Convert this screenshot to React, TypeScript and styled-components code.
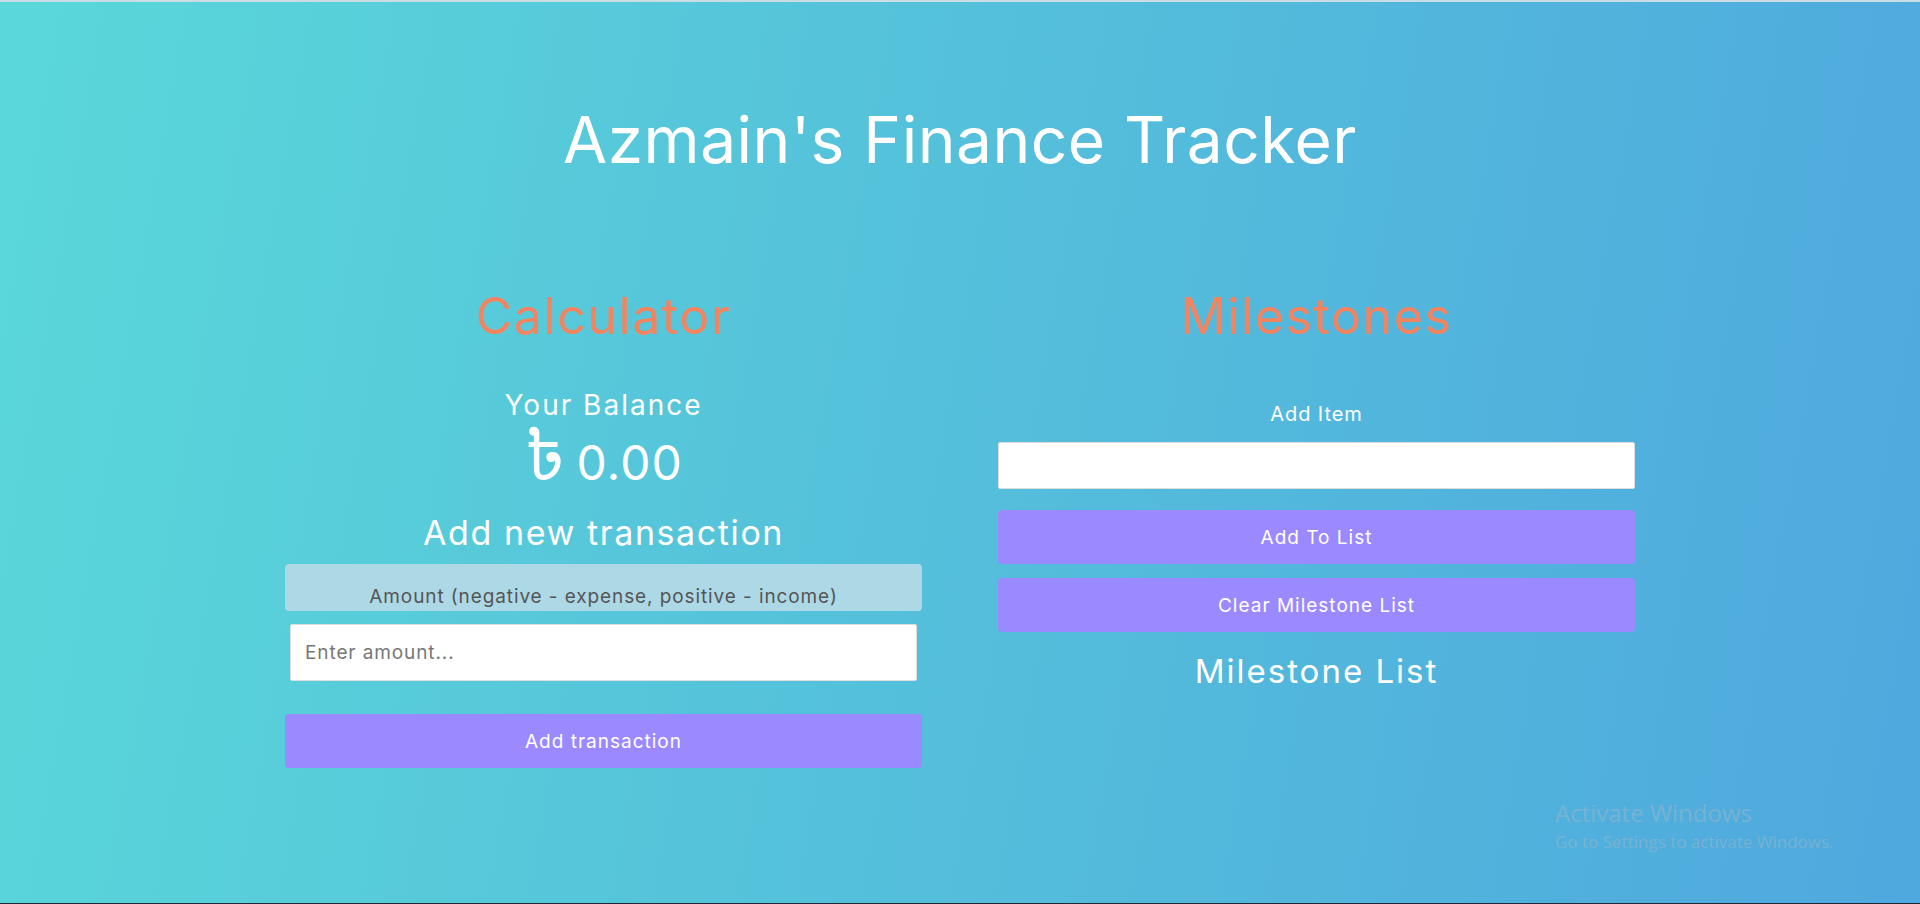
import React from "react";
import styled, { createGlobalStyle } from "styled-components";

const GlobalStyle = createGlobalStyle`
  html, body { margin: 0; padding: 0; }
  body { font-family: Inter, "Noto Sans", sans-serif; }
  * { box-sizing: border-box; }
`;

const Page = styled.div`
  position: relative;
  min-height: 904px;
  height: 904px;
  overflow: hidden;
  border-top: 2px solid #cadde5;
  border-bottom: 1px solid #1d2735;
  background: linear-gradient(100deg, #5ad8d9 0%, #54bfdb 50%, #4fa8de 100%);
  color: #fff;
  font-family: Inter, "Noto Sans", sans-serif;
`;

const Title = styled.h1`
  margin: 106px 0 0;
  font-size: 64px;
  line-height: 1;
  font-weight: 400;
  text-align: center;
  letter-spacing: 0.5px;
`;

const Columns = styled.main`
  width: 1350px;
  margin: 119px auto 0;
  display: grid;
  grid-template-columns: 637px 637px;
  column-gap: 76px;
  align-items: start;
`;

const Column = styled.section`
  display: flex;
  flex-direction: column;
  align-items: stretch;
  text-align: center;
`;

const SectionTitle = styled.h2`
  margin: 0;
  font-size: 50px;
  line-height: 1;
  font-weight: 400;
  letter-spacing: 1.6px;
  color: #f4845f;
`;

const Text = styled.div<{ $size: number; $top: number; $spacing: number }>`
  margin-top: ${(p) => p.$top}px;
  font-size: ${(p) => p.$size}px;
  letter-spacing: ${(p) => p.$spacing}px;
  line-height: 1;
  font-weight: 400;
  color: #fff;
`;

const Taka = styled.span`
  font-family: "Noto Sans Bengali", "Lohit Bengali", FreeSerif, "DejaVu Sans", sans-serif;
  font-size: 1.45em;
  line-height: 0.6;
  margin-right: 10px;
`;

const AmountLabel = styled.label`
  margin-top: 14px;
  height: 47px;
  display: flex;
  align-items: flex-end;
  justify-content: center;
  padding-bottom: 5px;
  background: #add8e6;
  border-radius: 4px;
  color: #555;
  font-size: 19px;
  letter-spacing: 0.9px;
  line-height: 1;
`;

const Input = styled.input<{ $height: number; $top: number; $inset: number }>`
  margin: ${(p) => p.$top}px ${(p) => p.$inset}px 0;
  height: ${(p) => p.$height}px;
  border: 1px solid #dedede;
  border-radius: 2px;
  background: #fff;
  padding: 0 14px;
  font-family: Inter, "Noto Sans", sans-serif;
  font-size: 19px;
  letter-spacing: 0.9px;
  color: #333;
  outline: none;
  &::placeholder { color: #777; }
`;

const Button = styled.button<{ $top: number }>`
  margin-top: ${(p) => p.$top}px;
  height: 54px;
  border: none;
  border-radius: 4px;
  background: #9b89ff;
  color: #fff;
  font-family: Inter, "Noto Sans", sans-serif;
  font-size: 19px;
  letter-spacing: 1px;
  font-weight: 400;
  cursor: pointer;
`;

const Watermark = styled.div`
  position: absolute;
  left: 1555px;
  top: 797px;
  font-family: "Segoe UI", "Open Sans", "Noto Sans", sans-serif;
  color: rgba(170, 185, 195, 0.45);
  line-height: 1.2;
`;

const WatermarkTitle = styled.div`
  font-size: 24px;
`;

const WatermarkSub = styled.div`
  font-size: 17px;
  margin-top: 4px;
`;

export default function App() {
  return (
    <>
      <GlobalStyle />
      <Page>
        <Title>Azmain's Finance Tracker</Title>
        <Columns>
          <Column>
            <SectionTitle>Calculator</SectionTitle>
            <Text $size={28} $top={50} $spacing={2}>Your Balance</Text>
            <Text $size={48} $top={20} $spacing={1}>
              <Taka>৳</Taka>0.00
            </Text>
            <Text $size={34} $top={29} $spacing={1.6}>Add new transaction</Text>
            <AmountLabel htmlFor="amount">Amount (negative - expense, positive - income)</AmountLabel>
            <Input id="amount" type="text" placeholder="Enter amount..." $height={57} $top={13} $inset={5} />
            <Button $top={33}>Add transaction</Button>
          </Column>
          <Column>
            <SectionTitle>Milestones</SectionTitle>
            <Text $size={20} $top={63} $spacing={0.9}>Add Item</Text>
            <Input type="text" $height={47} $top={18} $inset={0} />
            <Button $top={21}>Add To List</Button>
            <Button $top={14}>Clear Milestone List</Button>
            <Text $size={33} $top={23} $spacing={2}>Milestone List</Text>
          </Column>
        </Columns>
        <Watermark>
          <WatermarkTitle>Activate Windows</WatermarkTitle>
          <WatermarkSub>Go to Settings to activate Windows.</WatermarkSub>
        </Watermark>
      </Page>
    </>
  );
}
